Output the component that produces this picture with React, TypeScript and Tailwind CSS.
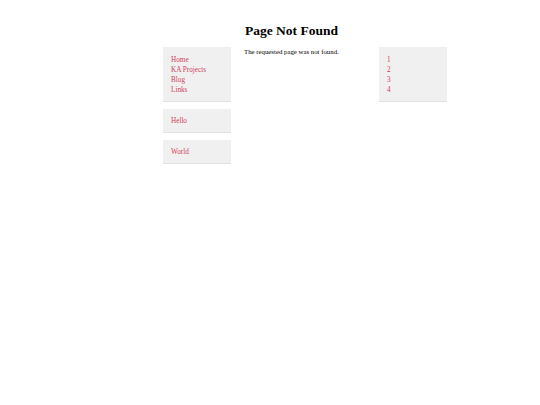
export default function App() {
  const links = ["Home", "KA Projects", "Blog", "Links"];
  const nums = ["1", "2", "3", "4"];

  return (
    <div className="min-h-screen bg-white font-['Liberation_Serif',serif] text-black">
      <div className="pl-[245px] pt-[22px]">
        <h1 className="text-[13.5px] font-bold leading-[18px]">Page Not Found</h1>
      </div>
      <div className="flex items-start pl-[163px] pt-[7px]">
        {/* Left sidebar */}
        <div className="flex w-[68px] flex-col gap-[8px]">
          <div className="bg-[#f0f0f0] px-[8px] pt-[8px] pb-[6px] shadow-[0_1px_0_#e2e2e2]">
            {links.map((l) => (
              <div key={l} className="text-[7.2px] leading-[10px] text-[#d23c5c]">
                {l}
              </div>
            ))}
          </div>
          <div className="bg-[#f0f0f0] px-[8px] pt-[8px] pb-[6px] shadow-[0_1px_0_#e2e2e2]">
            <div className="text-[7.2px] leading-[9px] text-[#d23c5c]">Hello</div>
          </div>
          <div className="bg-[#f0f0f0] px-[8px] pt-[8px] pb-[6px] shadow-[0_1px_0_#e2e2e2]">
            <div className="text-[7.2px] leading-[9px] text-[#d23c5c]">World</div>
          </div>
        </div>

        {/* Main */}
        <div className="ml-[13px] w-[122px]">
          <p className="text-[6.8px] leading-[9px]">The requested page was not found.</p>
        </div>

        {/* Right sidebar */}
        <div className="ml-[13px] w-[68px] bg-[#f0f0f0] px-[8px] pt-[8px] pb-[6px] shadow-[0_1px_0_#e2e2e2]">
          {nums.map((n) => (
            <div key={n} className="text-[7.2px] leading-[10px] text-[#d23c5c]">
              {n}
            </div>
          ))}
        </div>
      </div>
    </div>
  );
}
